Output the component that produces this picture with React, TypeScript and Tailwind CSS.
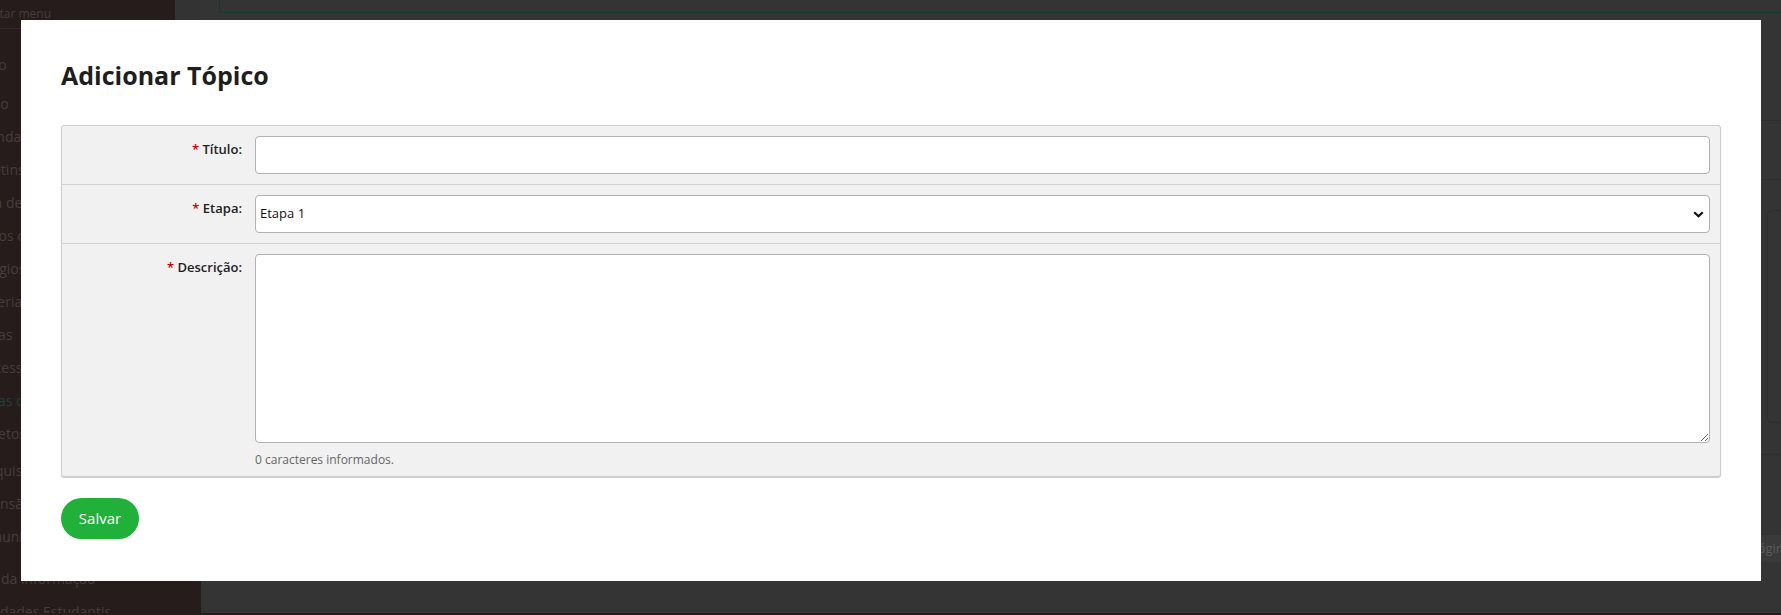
import React from "react";

const menu = [
  "Início",
  "Plano",
  "Agenda",
  "Boletins",
  "Lista de presença",
  "Dados cadastrais",
  "Estágios",
  "Materiais extras",
  "Fichas",
  "Processos",
  "Fichas de matrícula",
  "Projetos",
];

const menu2 = ["Pesquisas", "Extensão", "Comunidade"];

function Req() {
  return <span className="text-[#cc0000]">* </span>;
}

export default function App() {
  return (
    <div className="relative w-[1781px] h-[615px] overflow-hidden bg-[#261c1b] font-['Open_Sans',sans-serif]">
      {/* page behind the dialog (already dimmed) */}
      <div className="flex h-[613px]">
        <aside className="w-[201px] shrink-0 overflow-hidden bg-[#261c1b] text-[14px] text-[#463d3c]">
          <div className="flex">
            <div className="w-[175px] h-[29px] border-b border-[#352b2a] flex items-center whitespace-nowrap">
              <span className="-ml-[26px] text-[12px]">Ocultar menu</span>
            </div>
            <div className="flex-1 bg-[#333333]" />
          </div>
          <div className="mt-[19px]">
            {menu.map((m, i) => (
              <div
                key={m}
                className={"h-[33px] flex items-center whitespace-nowrap " + (i === 1 ? "mt-[6px]" : "")}
              >
                <span className={"-ml-[28px] " + (i === 10 ? "text-[#1f4038]" : "")}>{m}</span>
              </div>
            ))}
          </div>
          <div className="mt-[4px]">
            {menu2.map((m) => (
              <div key={m} className="h-[33px] flex items-center whitespace-nowrap">
                <span className="-ml-[28px]">{m}</span>
              </div>
            ))}
          </div>
          <div className="mt-[9px] h-[33px] flex items-center whitespace-nowrap">
            <span className="-ml-[28px]">Uso da informação</span>
          </div>
          <div className="h-[33px] flex items-center whitespace-nowrap">
            <span className="-ml-[28px]">Atividades Estudantis</span>
          </div>
        </aside>

        <main className="flex-1 flex flex-col bg-[#343434]">
          <div className="flex h-[13px]">
            <div className="w-[19px] border-r border-[#173a2e]" />
            <div className="flex-1 border-b border-[#173a2e]" />
          </div>
          <div className="h-[108px] border-b border-[#2b302e]" />
          <div className="h-[59px] border-b border-[#2b302e]" />
          <div className="flex justify-end pt-[30px]">
            <div className="w-[14px] h-[213px] rounded-l-[5px] border border-r-0 border-[#2b302e]" />
          </div>
          <div className="h-[32px] border-b border-[#2b302e]" />
          <div className="mt-[80px] h-[27px] bg-[#3a3a3a] flex items-center justify-end">
            <span className="-mr-[10px] text-[13px] text-[#5a5a5a]">Página</span>
          </div>
        </main>
      </div>

      {/* dialog */}
      <div className="absolute left-[21px] top-[20px] w-[1740px] h-[561px] bg-white px-[40px] pt-[40px]">
        <h2 className="text-[25px] leading-[30px] font-bold text-[#1e1e1e]">Adicionar Tópico</h2>

        <div className="mt-[35px] rounded-[3px] border border-[#cdcdcd] bg-[#f1f1f1] shadow-[0_1px_1px_rgba(0,0,0,0.2)]">
          <div className="flex py-[10px] pr-[10px] border-b border-[#d2d2d2]">
            <label className="w-[180px] pt-[4px] text-right text-[13px] leading-[18px] font-semibold text-[#222]">
              <Req />
              Título:
            </label>
            <input
              type="text"
              className="ml-[13px] flex-1 h-[38px] rounded-[4px] border border-[#b1b1b1] bg-white px-[4px] text-[13px] outline-none"
            />
          </div>

          <div className="flex py-[10px] pr-[10px] border-b border-[#d2d2d2]">
            <label className="w-[180px] pt-[4px] text-right text-[13px] leading-[18px] font-semibold text-[#222]">
              <Req />
              Etapa:
            </label>
            <div className="relative ml-[13px] flex-1">
              <select className="w-full h-[38px] appearance-none rounded-[4px] border border-[#b1b1b1] bg-white pl-[4px] text-[13px] text-[#111] outline-none">
                <option>Etapa 1</option>
                <option>Etapa 2</option>
              </select>
              <svg
                className="pointer-events-none absolute right-[6px] top-[16px]"
                width="11"
                height="7"
                viewBox="0 0 11 7"
              >
                <path d="M1.2 1.2 5.5 5.3 9.8 1.2" fill="none" stroke="#111" strokeWidth="2.2" />
              </svg>
            </div>
          </div>

          <div className="flex pt-[10px] pb-[7px] pr-[10px]">
            <label className="w-[180px] pt-[4px] text-right text-[13px] leading-[18px] font-semibold text-[#222]">
              <Req />
              Descrição:
            </label>
            <div className="ml-[13px] flex-1 flex flex-col">
              <textarea className="h-[189px] w-full rounded-[4px] border border-[#b1b1b1] bg-white p-[4px] text-[13px] outline-none" />
              <span className="mt-[8px] text-[12px] leading-[18px] text-[#666]">0 caracteres informados.</span>
            </div>
          </div>
        </div>

        <button className="mt-[21px] h-[41px] w-[78px] rounded-full bg-[#21b03a] text-[15px] text-white">
          Salvar
        </button>
      </div>
    </div>
  );
}
